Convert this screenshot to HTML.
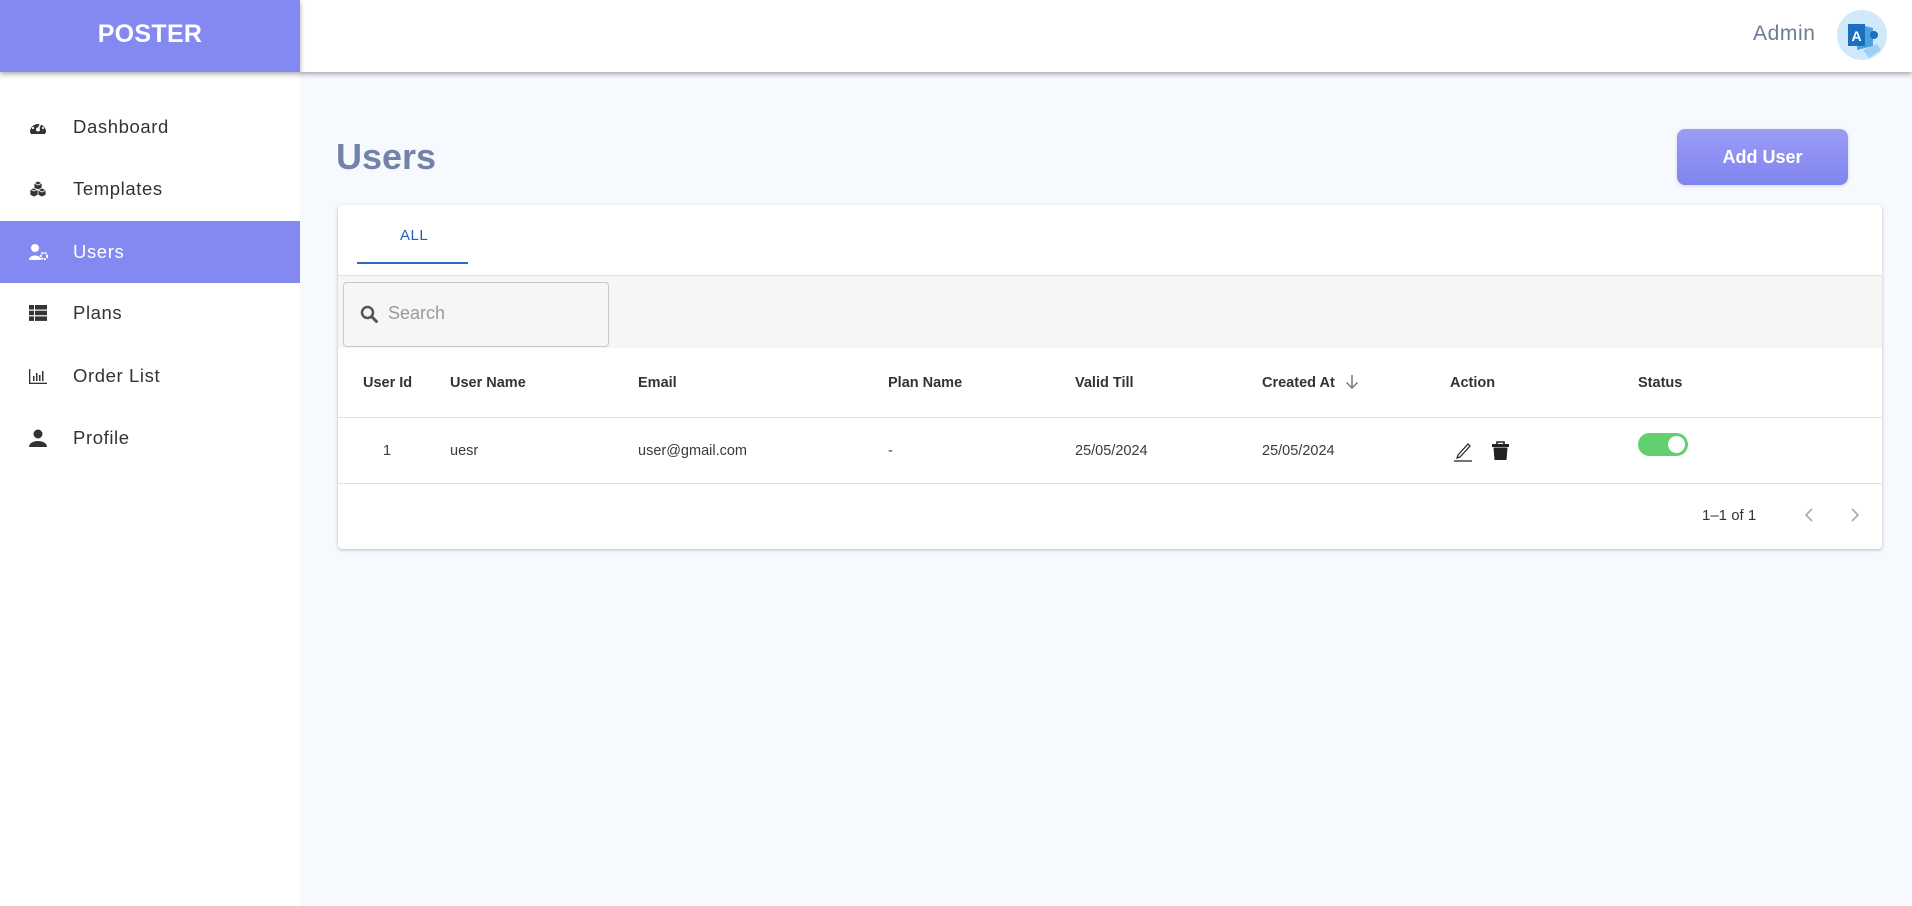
<!DOCTYPE html>
<html><head><meta charset="utf-8"><style>
*{margin:0;padding:0;box-sizing:border-box}
body{width:1912px;height:906px;background:#f6f9fd;font-family:"Liberation Sans",sans-serif;position:relative;overflow:hidden}
.a{position:absolute}
#side{left:0;top:0;width:300px;height:906px;background:#fff}
#logo{left:0;top:0;width:300px;height:72px;background:#8489f2;color:#fff;font-weight:bold;font-size:25px;text-align:center;line-height:68px;letter-spacing:0.3px}
#hdr{left:300px;top:0;width:1612px;height:72px;background:#fff;box-shadow:0 2px 5px rgba(0,0,0,.35)}
#logo{box-shadow:0 2px 5px rgba(0,0,0,.35);z-index:2}
.nav{left:0;width:300px;height:62px;font-size:18.5px;color:#333;line-height:62px;letter-spacing:0.6px}
.nav span{position:absolute;left:73px}
.nav svg{position:absolute;left:29px;top:22px}
.act{background:#8489f2;color:#fff}
.th{font-size:14.5px;font-weight:bold;color:#333;top:375px}
.td{font-size:14.5px;color:#3a3a3a;top:443px}
</style></head><body>
<div class="a" id="side"></div>
<div class="a" id="hdr"></div>
<div class="a" id="logo">POSTER</div>
<div class="a" style="left:1753px;top:22px;font-size:21px;color:#6f7a96;letter-spacing:0.6px">Admin</div>
<svg class="a" style="left:1837px;top:10px" width="50" height="50" viewBox="0 0 50 50"><circle cx="25" cy="25" r="25" fill="#cfe9fa"/><path d="M20 14 L36 18 L36 36 L20 40 Z" fill="#4aa3e0"/><path d="M26 40 L40 34 L44 40 L32 48Z" fill="#9dd0f2"/><rect x="11" y="14" width="17" height="22" fill="#1a6fc0"/><text x="19.5" y="31" font-size="14" font-weight="bold" fill="#fff" text-anchor="middle" font-family="Liberation Sans">A</text><circle cx="37" cy="25" r="4" fill="#1a6fc0"/></svg>

<div class="a nav" style="top:96px"><svg width="18" height="18" viewBox="0 0 18 18"><path d="M1 14 A8 8 0 1 1 17 14 L16 16 L2 16Z" fill="#333"/><circle cx="9" cy="11.5" r="2" fill="#fff"/><path d="M9 11.5 L12 5" stroke="#fff" stroke-width="1.6"/><circle cx="4" cy="10" r="1.1" fill="#fff"/><circle cx="6" cy="5.5" r="1.1" fill="#fff"/><circle cx="14" cy="10" r="1.1" fill="#fff"/></svg><span>Dashboard</span></div>
<div class="a nav" style="top:158px"><svg width="18" height="18" viewBox="0 0 18 18"><path d="M9 1 L13 3 L13 8 L9 10 L5 8 L5 3Z M1 9 L5 8 L9 10 L9 15 L5 17 L1 15Z M9 10 L13 8 L17 10 L17 15 L13 17 L9 15Z" fill="#333" stroke="#fff" stroke-width="0.8"/><path d="M5 3 L9 5 L13 3 M1 9 L5 11 L9 9 M9 10 L13 12 L17 10" fill="none" stroke="#fff" stroke-width="0.8"/></svg><span>Templates</span></div>
<div class="a nav act" style="top:221px"><svg width="20" height="18" viewBox="0 0 20 18"><circle cx="6" cy="5" r="4" fill="#fff"/><path d="M0 17 C0 11 12 11 12 17Z" fill="#fff"/><circle cx="15" cy="13" r="3.2" fill="none" stroke="#fff" stroke-width="2" stroke-dasharray="2 1"/></svg><span>Users</span></div>
<div class="a nav" style="top:282px"><svg width="18" height="18" viewBox="0 0 18 18" fill="#333"><rect x="0" y="1" width="5" height="4.5"/><rect x="6" y="1" width="12" height="4.5"/><rect x="0" y="6.7" width="5" height="4.5"/><rect x="6" y="6.7" width="12" height="4.5"/><rect x="0" y="12.4" width="5" height="4.5"/><rect x="6" y="12.4" width="12" height="4.5"/></svg><span>Plans</span></div>
<div class="a nav" style="top:345px"><svg width="18" height="18" viewBox="0 0 18 18" fill="#333"><rect x="0" y="2" width="1.3" height="15"/><rect x="0" y="15.7" width="18" height="1.3"/><rect x="4" y="9" width="1.5" height="5"/><rect x="7" y="6" width="1.5" height="8"/><rect x="10" y="8" width="1.5" height="6"/><rect x="13" y="4" width="1.5" height="10"/></svg><span>Order List</span></div>
<div class="a nav" style="top:407px"><svg width="18" height="18" viewBox="0 0 18 18" fill="#333"><circle cx="9" cy="5" r="4.5"/><path d="M0 18 C0 10 18 10 18 18Z"/></svg><span>Profile</span></div>

<div class="a" style="left:336px;top:136px;font-size:36px;font-weight:bold;color:#7383a8">Users</div>
<div class="a" style="left:1677px;top:129px;width:171px;height:56px;border-radius:8px;background:linear-gradient(#9a9cf6,#8085ef);color:#fff;font-size:18px;font-weight:bold;text-align:center;line-height:56px;box-shadow:0 1px 3px rgba(0,0,0,.15)">Add User</div>

<div class="a" style="left:338px;top:205px;width:1544px;height:344px;background:#fff;border-radius:4px;box-shadow:0 1px 3px rgba(0,0,0,.25)"></div>
<div class="a" style="left:400px;top:227px;font-size:15px;color:#1f5fb8;letter-spacing:0.5px">ALL</div>
<div class="a" style="left:357px;top:262px;width:111px;height:2px;background:#2f6bbd"></div>
<div class="a" style="left:338px;top:275px;width:1544px;height:1px;background:#e2e2e2"></div>
<div class="a" style="left:338px;top:276px;width:1544px;height:72px;background:#f6f6f6"></div>
<div class="a" style="left:343px;top:282px;width:266px;height:65px;border:1px solid #c8c8c8;border-radius:4px;background:#f6f6f6"></div>
<svg class="a" style="left:360px;top:305px" width="18" height="18" viewBox="0 0 18 18"><circle cx="7.5" cy="7.5" r="5.5" fill="none" stroke="#555" stroke-width="2.5"/><path d="M11.5 11.5 L16.5 16.5" stroke="#555" stroke-width="3" stroke-linecap="round"/></svg>
<div class="a" style="left:388px;top:303px;font-size:18px;color:#9a9a9a">Search</div>

<div class="a th" style="left:363px">User Id</div>
<div class="a th" style="left:450px">User Name</div>
<div class="a th" style="left:638px">Email</div>
<div class="a th" style="left:888px">Plan Name</div>
<div class="a th" style="left:1075px">Valid Till</div>
<div class="a th" style="left:1262px">Created At</div>
<svg class="a" style="left:1345px;top:374px" width="14" height="16" viewBox="0 0 14 16"><path d="M7 1 V14 M1.5 8.5 L7 14 L12.5 8.5" fill="none" stroke="#777" stroke-width="1.5"/></svg>
<div class="a th" style="left:1450px">Action</div>
<div class="a th" style="left:1638px">Status</div>
<div class="a" style="left:338px;top:417px;width:1544px;height:1px;background:#e0e0e0"></div>

<div class="a td" style="left:383px">1</div>
<div class="a td" style="left:450px">uesr</div>
<div class="a td" style="left:638px">user@gmail.com</div>
<div class="a td" style="left:888px">-</div>
<div class="a td" style="left:1075px">25/05/2024</div>
<div class="a td" style="left:1262px">25/05/2024</div>
<svg class="a" style="left:1453px;top:440px" width="20" height="22" viewBox="0 0 20 22"><path d="M5 15 L15 4 L17 6 L7 17 L4 18Z" fill="none" stroke="#222" stroke-width="1.2"/><path d="M1 21 H19" stroke="#222" stroke-width="1.2"/></svg>
<svg class="a" style="left:1491px;top:441px" width="19" height="20" viewBox="0 0 19 20"><path d="M6 3 V1 H13 V3" fill="none" stroke="#222" stroke-width="1.6"/><rect x="1" y="3" width="17" height="3" fill="#222"/><path d="M2.5 6.5 H16.5 L15.5 19 H3.5Z" fill="#222"/></svg>
<div class="a" style="left:1638px;top:433px;width:50px;height:23px;border-radius:12px;background:#62d06e"></div>
<div class="a" style="left:1668px;top:436px;width:17px;height:17px;border-radius:50%;background:#fff"></div>
<div class="a" style="left:338px;top:483px;width:1544px;height:1px;background:#e0e0e0"></div>

<div class="a" style="left:1702px;top:507px;font-size:15px;color:#333">1–1 of 1</div>
<svg class="a" style="left:1802px;top:507px" width="14" height="16" viewBox="0 0 14 16"><path d="M10 2 L4 8 L10 14" fill="none" stroke="#aaa" stroke-width="1.6"/></svg>
<svg class="a" style="left:1848px;top:507px" width="14" height="16" viewBox="0 0 14 16"><path d="M4 2 L10 8 L4 14" fill="none" stroke="#aaa" stroke-width="1.6"/></svg>
</body></html>
